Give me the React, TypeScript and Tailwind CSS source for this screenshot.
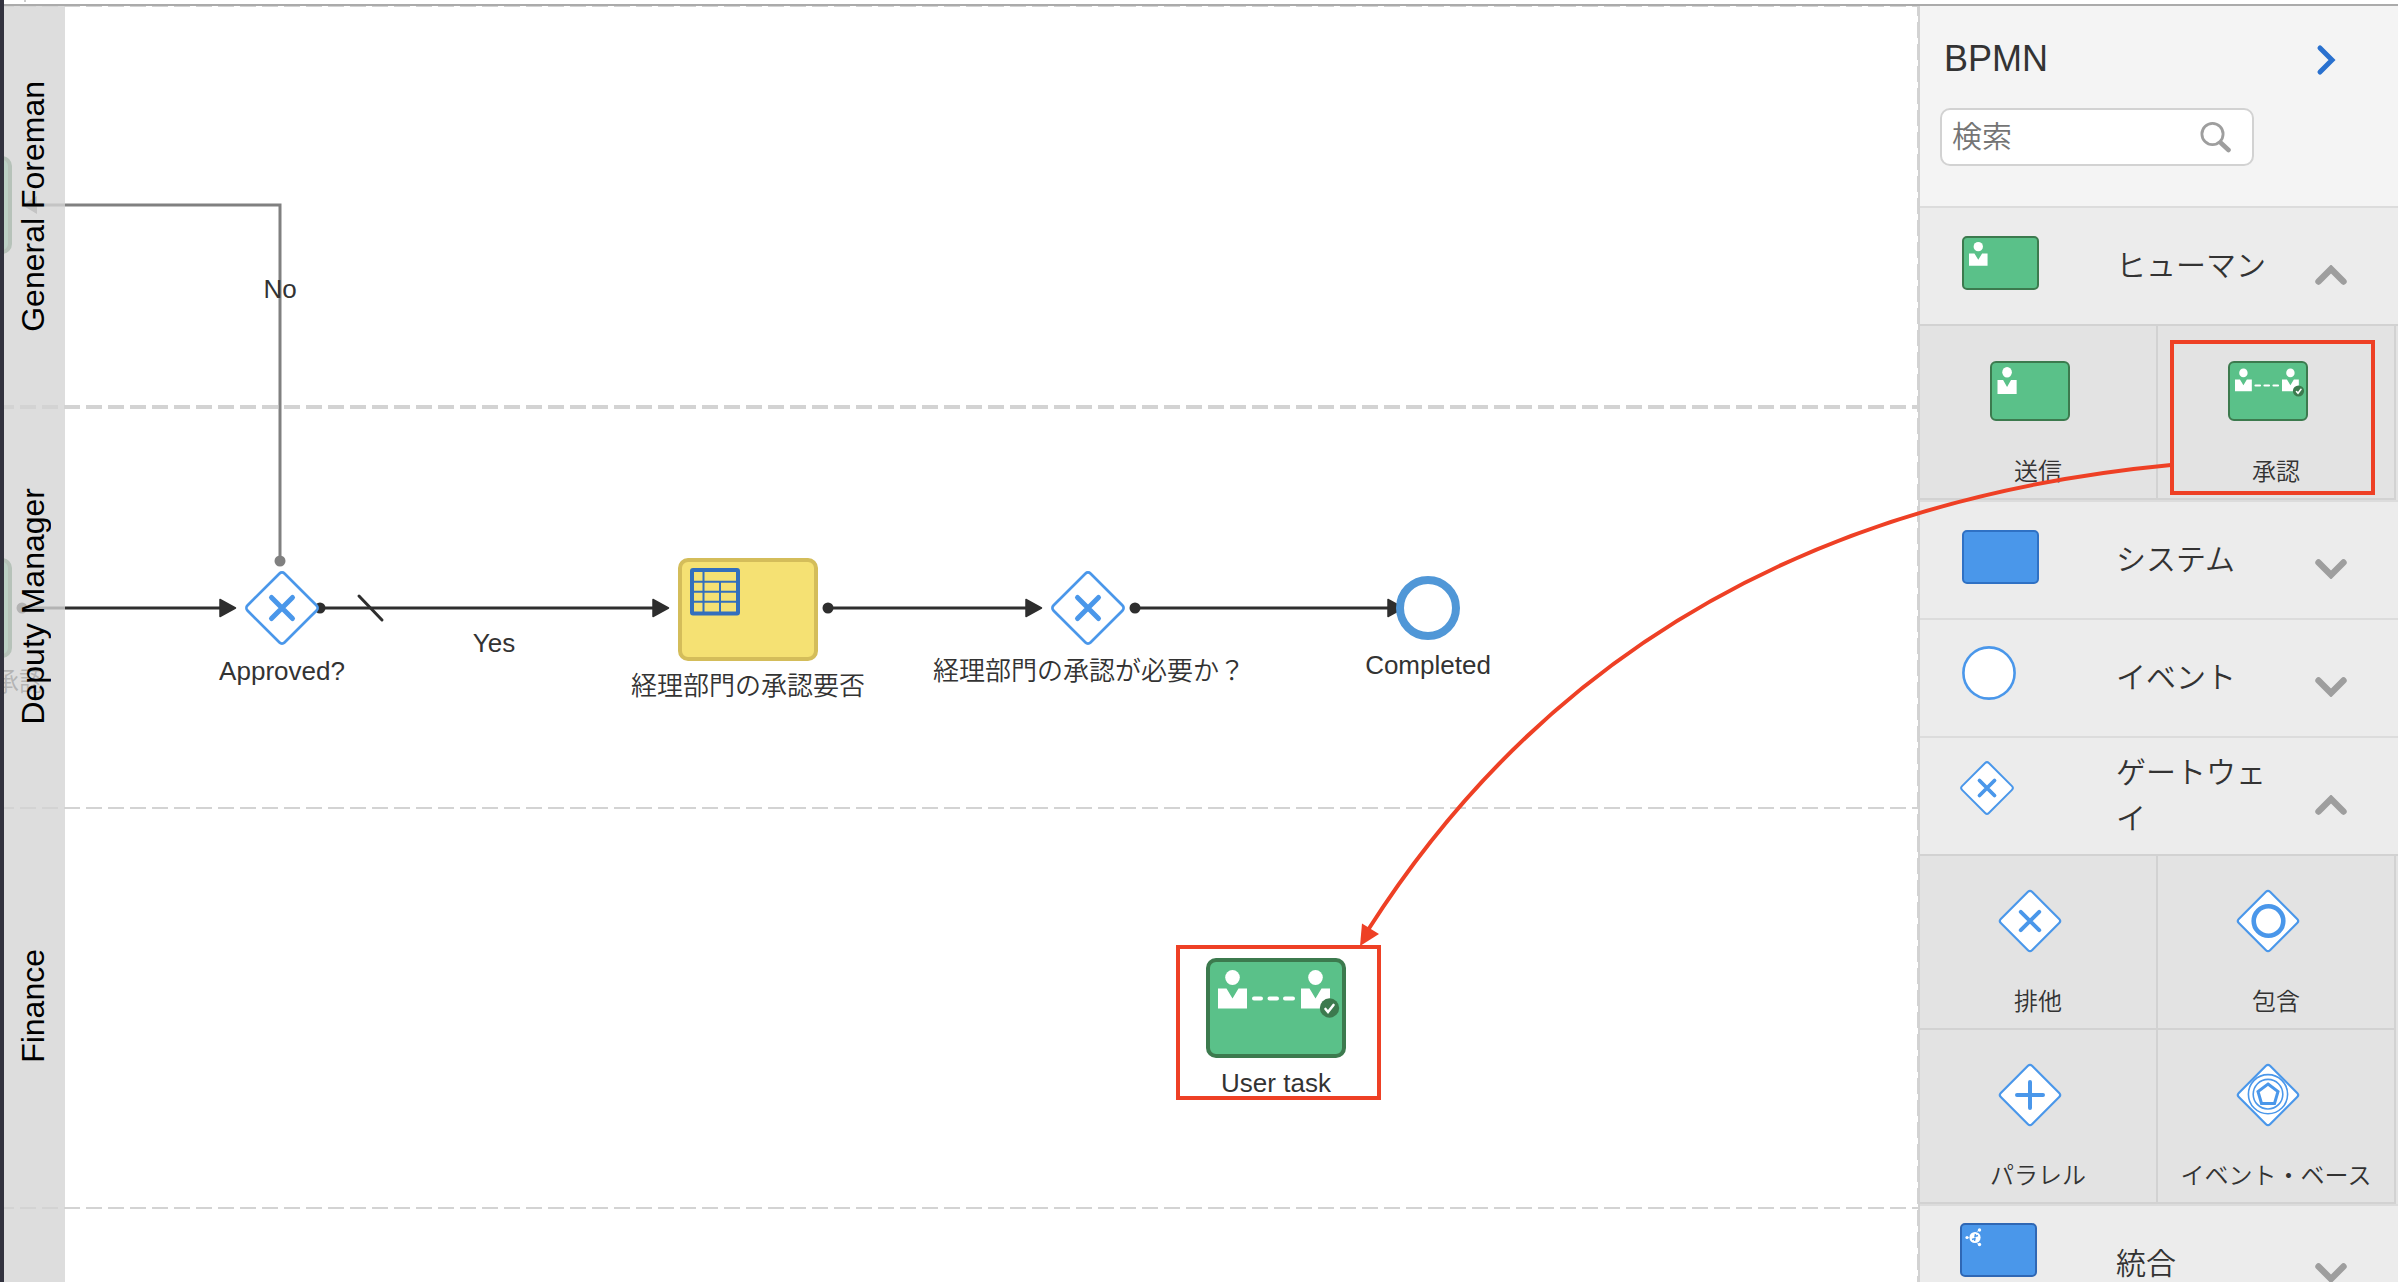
import React, { useState } from "react";

const BLUE = "#4a97ea";

/* ---------- shared glyphs ---------- */

function Person() {
  return (
    <g fill="#fff">
      <ellipse cx="14.5" cy="7.5" rx="7.3" ry="7.5" />
      <path d="M0 18.5H8.5L14.5 28.5L20.5 18.5H29V38.5H0Z" />
    </g>
  );
}

function DiamondShape({ cx, cy, r, width }: { cx: number; cy: number; r: number; width: number }) {
  const side = (r - 1) * 1.414 - width / 2;
  return (
    <rect
      x={cx - side / 2}
      y={cy - side / 2}
      width={side}
      height={side}
      rx={width * 1.3}
      fill="#fff"
      stroke={BLUE}
      strokeWidth={width}
      transform={`rotate(45 ${cx} ${cy})`}
    />
  );
}

function Cross({ cx, cy, r, width }: { cx: number; cy: number; r: number; width: number }) {
  return (
    <path
      d={`M${cx - r} ${cy - r}L${cx + r} ${cy + r}M${cx + r} ${cy - r}L${cx - r} ${cy + r}`}
      stroke={BLUE}
      strokeWidth={width}
      strokeLinecap="round"
    />
  );
}

function ApprovalShape() {
  return (
    <>
      <rect x="2" y="2" width="136" height="96" rx="8" fill="#5ac189" stroke="#3c7a4e" strokeWidth="4" />
      <g transform="translate(12 12)">
        <Person />
      </g>
      <g transform="translate(95 12)">
        <Person />
      </g>
      <path d="M48 40.5H55M63.500 40.5H71M79 40.5H87" stroke="#fff" strokeWidth="4" strokeLinecap="round" />
      <circle cx="123.500" cy="50" r="9.700" fill="#3c7a4e" />
      <path d="M119.500 51L122 54L127.500 47" fill="none" stroke="#fff" strokeWidth="2.600" strokeLinecap="round" />
    </>
  );
}

/* ---------- palette icons: categories ---------- */

function HumanIcon() {
  return (
    <svg width="84" height="84" aria-hidden="true">
      <rect x="5" y="15" width="75" height="52" rx="4" fill="#5ac189" stroke="#3c7a4e" strokeWidth="2" />
      <g transform="translate(11 20) scale(.64 .62)">
        <Person />
      </g>
    </svg>
  );
}

function SystemIcon() {
  return (
    <svg width="84" height="84" aria-hidden="true">
      <rect x="5" y="15" width="75" height="52" rx="4" fill={BLUE} stroke="#2f71c4" strokeWidth="2" />
    </svg>
  );
}

function EventIcon() {
  return (
    <svg width="84" height="84" aria-hidden="true">
      <circle cx="31" cy="39" r="25.600" fill="#fff" stroke={BLUE} strokeWidth="2.600" />
    </svg>
  );
}

function GatewayIcon() {
  return (
    <svg width="84" height="84" fill="none" aria-hidden="true">
      <DiamondShape cx={29} cy={36} r={28.5} width={2} />
      <Cross cx={29} cy={36} r={7.5} width={3.8} />
    </svg>
  );
}

function IntegrationIcon() {
  return (
    <svg width="84" height="84" fill="none" aria-hidden="true">
      <rect x="3" y="4" width="75" height="52" rx="4" fill={BLUE} stroke="#2f67b4" strokeWidth="2" />
      <circle cx="17" cy="17.500" r="5.600" fill="#fff" />
      <path d="M11 17.500H8M19 12L21 9.500M19 23L21 25" stroke="#fff" strokeWidth="1" opacity=".5" />
      <circle cx="9" cy="17.500" r="1.600" fill="#fff" />
      <circle cx="21.500" cy="10" r="1.700" fill="#fff" />
      <circle cx="21.500" cy="24.500" r="1.700" fill="#fff" />
      <path d="M14 19.500L17 18.500L16.500 21M20 15.500L17 16.500L17.500 14" stroke={BLUE} strokeWidth="1.400" />
    </svg>
  );
}

/* ---------- palette icons: elements ---------- */

function SendIcon() {
  return (
    <svg width="80" height="64" aria-hidden="true">
      <rect x="1" y="3" width="78" height="58" rx="5" fill="#5ac189" stroke="#3c7a4e" strokeWidth="2" />
      <g transform="translate(7.500 8) scale(.66 .7)">
        <Person />
      </g>
    </svg>
  );
}

function ApprovalIcon() {
  return (
    <svg width="80" height="64" aria-hidden="true">
      <rect x="1" y="3" width="78" height="58" rx="5" fill="#5ac189" stroke="#3c7a4e" strokeWidth="2" />
      <g transform="translate(7 9.500) scale(.58 .59)">
        <Person />
      </g>
      <g transform="translate(54 9.500) scale(.58 .59)">
        <Person />
      </g>
      <path d="M27.500 26.500H32M36.500 26.500H41M45.500 26.500H50" stroke="#fff" strokeWidth="2.200" strokeLinecap="round" />
      <circle cx="70.500" cy="32" r="5.600" fill="#3c7a4e" />
      <path d="M68.500 32.500L70 34.300L73 30.300" fill="none" stroke="#fff" strokeWidth="1.600" strokeLinecap="round" />
    </svg>
  );
}

function ExclusiveIcon() {
  return (
    <svg width="80" height="64" fill="none" aria-hidden="true">
      <DiamondShape cx={40} cy={32} r={33} width={2.2} />
      <Cross cx={40} cy={32} r={9.2} width={4} />
    </svg>
  );
}

function InclusiveIcon() {
  return (
    <svg width="80" height="64" fill="none" aria-hidden="true">
      <DiamondShape cx={40} cy={32} r={33} width={2.2} />
      <circle cx="40.500" cy="32" r="14.800" stroke={BLUE} strokeWidth="4.600" />
    </svg>
  );
}

function ParallelIcon() {
  return (
    <svg width="80" height="64" fill="none" aria-hidden="true">
      <DiamondShape cx={40} cy={32} r={33} width={2.2} />
      <path d="M27 32H53M40 19V45" stroke={BLUE} strokeWidth="4" strokeLinecap="round" />
    </svg>
  );
}

function EventBasedIcon() {
  return (
    <svg width="80" height="64" fill="none" stroke={BLUE} aria-hidden="true">
      <DiamondShape cx={40} cy={32} r={33} width={2.2} />
      <circle cx="40" cy="31.200" r="19.600" strokeWidth="1.600" />
      <circle cx="40" cy="31.200" r="14.800" strokeWidth="1.600" />
      <path d="M40 21L50 28.500L46.500 40.500H33.500L30 28.500Z" strokeWidth="3" />
    </svg>
  );
}

/* ---------- palette ---------- */

function Chevron({ open }: { open: boolean }) {
  return (
    <svg width="32" height="20" viewBox="0 0 32 20" fill="none" aria-hidden="true">
      <path
        d={open ? "M3.500 16.500L16 4L28.500 16.500" : "M3.500 3.500L16 16L28.500 3.500"}
        stroke="#9e9e9e"
        strokeWidth="6.400"
        strokeLinecap="round"
      />
    </svg>
  );
}

type Item = { label: string; icon: React.ReactNode };

function Section({
  label,
  icon,
  items,
  defaultOpen = false,
}: {
  label: string;
  icon: React.ReactNode;
  items?: Item[];
  defaultOpen?: boolean;
}) {
  const [open, setOpen] = useState(defaultOpen);
  return (
    <section>
      <h2>
        <button
          type="button"
          aria-expanded={open}
          onClick={() => setOpen(!open)}
          className="flex h-[118px] w-full items-center border-t-2 border-[#dcdcdc] bg-[#ececec] pl-[38px] pr-[51px] text-left"
        >
          <span className="shrink-0 pb-1">{icon}</span>
          <span className="ml-[74px] w-40 text-[30px] leading-[46px]">{label}</span>
          <span className="ml-auto pt-[18px]">
            <Chevron open={open} />
          </span>
        </button>
      </h2>
      {open && items && (
        <ul className="grid grid-cols-2 border-t-2 border-[#d2d2d2] bg-[#e3e3e3] pr-0.5">
          {items.map((item) => (
            <li key={item.label} className="border-b-2 border-r-2 border-[#d2d2d2]">
              <button type="button" className="flex h-[172px] w-full cursor-grab flex-col items-center pt-[33px]">
                <span className="mr-4">{item.icon}</span>
                <span className="mt-[31px] whitespace-nowrap text-2xl leading-9">{item.label}</span>
              </button>
            </li>
          ))}
        </ul>
      )}
    </section>
  );
}

function Palette() {
  return (
    <aside className="flex w-[480px] shrink-0 flex-col overflow-hidden border-l-2 border-[#d2d2d2] bg-[#f4f4f4] text-[#333]">
      <header className="h-[200px] shrink-0 pl-5">
        <div className="flex h-[102px] items-center justify-between pl-1 pr-[60px] pt-1">
          <h1 className="text-[36px] leading-10">BPMN</h1>
          <button type="button" aria-label="Collapse palette" className="pt-0.5">
            <svg width="22" height="32" viewBox="0 0 22 32" fill="none">
              <path d="M4 4L16 16L4 28" stroke="#2a71cf" strokeWidth="5" strokeLinecap="round" />
            </svg>
          </button>
        </div>
        <div className="flex h-[58px] w-[314px] items-center rounded-[10px] border-2 border-[#d2d2d2] bg-white pl-2.5 pr-5">
          <input
            type="search"
            aria-label="検索"
            placeholder="検索"
            className="min-w-0 flex-1 bg-transparent text-[30px] leading-10 outline-none placeholder:text-[#757575]"
          />
          <svg width="32" height="32" viewBox="0 0 32 32" fill="none" stroke="#9e9e9e" strokeLinecap="round" aria-hidden="true">
            <circle cx="12.500" cy="13" r="10.600" strokeWidth="2.800" />
            <path d="M21 22L28.500 29" strokeWidth="4.600" />
          </svg>
        </div>
      </header>
      <Section
        label="ヒューマン"
        icon={<HumanIcon />}
        defaultOpen
        items={[
          { label: "送信", icon: <SendIcon /> },
          { label: "承認", icon: <ApprovalIcon /> },
        ]}
      />
      <Section label="システム" icon={<SystemIcon />} />
      <Section label="イベント" icon={<EventIcon />} />
      <Section
        label="ゲートウェイ"
        icon={<GatewayIcon />}
        defaultOpen
        items={[
          { label: "排他", icon: <ExclusiveIcon /> },
          { label: "包含", icon: <InclusiveIcon /> },
          { label: "パラレル", icon: <ParallelIcon /> },
          { label: "イベント・ベース", icon: <EventBasedIcon /> },
        ]}
      />
      <Section label="統合" icon={<IntegrationIcon />} />
    </aside>
  );
}

/* ---------- diagram ---------- */

function ArrowHead({ x, y }: { x: number; y: number }) {
  return (
    <path
      d={`M${x} ${y - 8.500}L${x + 15.500} ${y}L${x} ${y + 8.500}Z`}
      fill="#2e2e2e"
      stroke="#2e2e2e"
      strokeWidth="1.500"
      strokeLinejoin="round"
    />
  );
}

function Flows() {
  return (
    <svg className="absolute inset-0 h-full w-full" fill="none" aria-hidden="true">
      <path d="M33 199H276V555" stroke="#808080" strokeWidth="3" />
      <path d="M33 190L18 199L33 208Z" fill="#808080" />
      <circle cx="276" cy="555" r="5.500" fill="#808080" />
      <g stroke="#2e2e2e" strokeWidth="3">
        <path d="M18 602H216" />
        <path d="M317 602H650" />
        <path d="M824 602H1022" />
        <path d="M1131 602H1384" />
        <path d="M355 590L378 614" strokeLinecap="round" />
      </g>
      <g fill="#2e2e2e">
        <circle cx="18" cy="602" r="5.500" />
        <circle cx="316" cy="602" r="5.500" />
        <circle cx="824" cy="602" r="5.500" />
        <circle cx="1131" cy="602" r="5.500" />
      </g>
      <ArrowHead x={216} y={602} />
      <ArrowHead x={649} y={602} />
      <ArrowHead x={1022} y={602} />
      <ArrowHead x={1384} y={602} />
    </svg>
  );
}

function Gateway({ place }: { place: string }) {
  return (
    <svg width="80" height="80" fill="none" className={`absolute ${place}`} aria-hidden="true">
      <DiamondShape cx={40} cy={40} r={39} width={2.7} />
      <Cross cx={40} cy={40} r={10.5} width={5} />
    </svg>
  );
}

function Label({ place, children }: { place: string; children: React.ReactNode }) {
  return (
    <span className={`absolute -translate-x-1/2 whitespace-nowrap text-[26px] leading-8 text-[#333] ${place}`}>
      {children}
    </span>
  );
}

function RuleTask() {
  return (
    <svg width="140" height="104" fill="none" className="absolute left-[674px] top-[552px]" aria-hidden="true">
      <rect x="2" y="2" width="136" height="99" rx="8" fill="#f5e173" stroke="#d4bd5a" strokeWidth="4" />
      <g stroke="#336fbd">
        <rect x="14" y="12" width="46" height="43.500" rx="1" strokeWidth="4" />
        <path d="M14 23.800H60M14 33.800H60M14 43.800H60M25.500 12V55M42 24V55" strokeWidth="2" />
      </g>
    </svg>
  );
}

const DASH =
  "bg-[repeating-linear-gradient(90deg,#d3d3d3_0_10px,transparent_10px_16px,#d3d3d3_16px_22px)]";

function Lane({ name, rule }: { name: string; rule: string }) {
  return (
    <div className="relative flex h-[400px] shrink-0">
      <div className={`absolute inset-x-0 bottom-0 ${DASH} ${rule}`} />
      <div className="relative z-10 flex w-[58px] items-center justify-center">
        <span className="rotate-180 whitespace-nowrap text-[32px] leading-10 text-black [writing-mode:vertical-rl]">{name}</span>
      </div>
    </div>
  );
}

function Canvas() {
  return (
    <main className="relative min-w-0 flex-1 overflow-hidden bg-white">
      <div className={`absolute inset-x-0 top-0 h-px ${DASH}`} />
      <div className="absolute inset-y-0 right-0 w-px bg-[repeating-linear-gradient(180deg,#d3d3d3_0_10px,transparent_10px_16px,#d3d3d3_16px_22px)]" />

      <div className="absolute -left-32 top-[150px] h-[98px] w-[136px] rounded-[10px] border-4 border-[#3c7a4e] bg-[#5ac189]" />
      <div className="absolute -left-32 top-[552px] h-[100px] w-[136px] rounded-[10px] border-4 border-[#3c7a4e] bg-[#5ac189]" />
      <Label place="left-[15px] top-[660px]">承認</Label>

      <Flows />
      <Label place="left-[276px] top-[267px]">No</Label>
      <Gateway place="left-[238px] top-[562px]" />
      <Label place="left-[278px] top-[649px]">Approved?</Label>
      <Label place="left-[490px] top-[621px]">Yes</Label>
      <RuleTask />
      <Label place="left-[744px] top-[664px]">経理部門の承認要否</Label>
      <Gateway place="left-[1044px] top-[562px]" />
      <Label place="left-[1085px] top-[649px]">経理部門の承認が必要か？</Label>
      <svg width="64" height="64" className="absolute left-[1392px] top-[570px]" aria-hidden="true">
        <circle cx="32" cy="32" r="28" fill="#fff" stroke="#5097d7" strokeWidth="8" />
      </svg>
      <Label place="left-[1424px] top-[643px]">Completed</Label>
      <svg width="140" height="100" className="absolute left-[1202px] top-[952px]" aria-hidden="true">
        <ApprovalShape />
      </svg>
      <Label place="left-[1272px] top-[1061px]">User task</Label>

      <div className="absolute inset-y-0 left-0 w-[61px] bg-[#d5d5d5]/80" />
      <div className="flex flex-col">
        <Lane name="General Foreman" rule="h-1 translate-y-[3px]" />
        <Lane name="Deputy Manager" rule="h-0.5 translate-y-[3px]" />
        <Lane name="Finance" rule="h-0.5 translate-y-[3px]" />
      </div>
    </main>
  );
}

/* Red callout that points from the palette item to the placed task. */
function Callout() {
  return (
    <svg className="pointer-events-none absolute inset-0 h-full w-full" fill="none" aria-hidden="true">
      <g stroke="#ee4025" strokeWidth="4">
        <rect x="2172" y="342" width="201" height="151" />
        <rect x="1178" y="947" width="201" height="151" />
        <path d="M2171 465Q1632 516 1368 930" />
      </g>
      <path d="M1360 946L1362 923.500L1379 934Z" fill="#ee4025" />
    </svg>
  );
}

export default function App() {
  return (
    <div className="relative flex h-screen overflow-hidden bg-white font-['Liberation_Sans','Noto_Sans_CJK_JP',sans-serif] font-[350]">
      <div className="w-1 shrink-0 bg-[#32323e]" />
      <div className="flex min-w-0 flex-1 flex-col">
        <div className="h-1.5 shrink-0 border-b-2 border-[#ababab] pl-5">
          <div className="h-0.5 w-0.5 bg-[#cccccc]" />
        </div>
        <div className="flex min-h-0 flex-1">
          <Canvas />
          <Palette />
        </div>
      </div>
      <Callout />
    </div>
  );
}
